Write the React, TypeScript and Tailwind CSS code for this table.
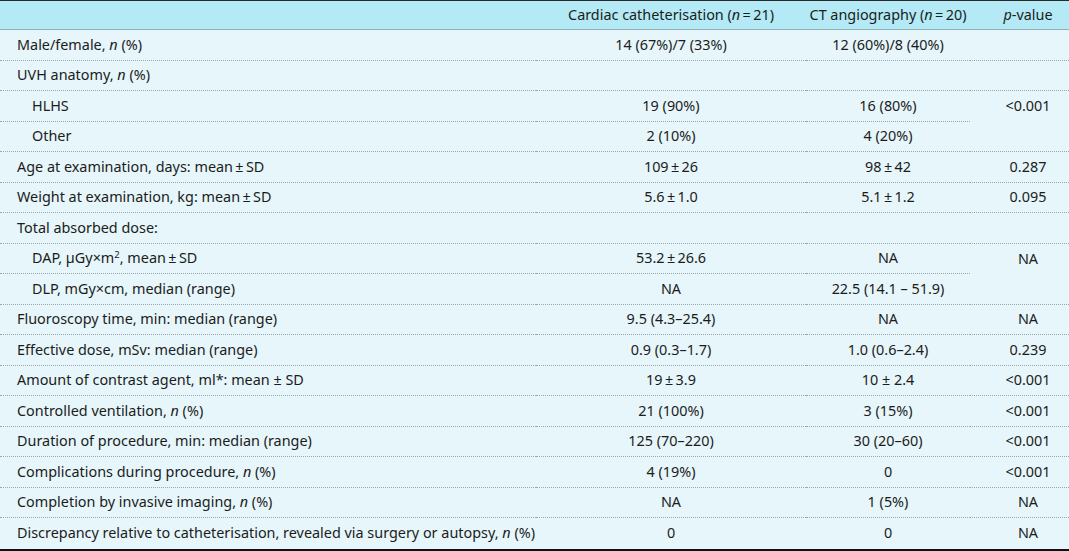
import React from "react";

type Row = {
  label: React.ReactNode;
  indent?: boolean;
  c: string;
  t: string;
  p?: string;
  pspan?: boolean;
  pskip?: boolean;
  last?: boolean;
};

const n = <i>n</i>;

const rows: Row[] = [
  { label: <>Male/female, {n} (%)</>, c: "14 (67%)/7 (33%)", t: "12 (60%)/8 (40%)", p: "" },
  { label: <>UVH anatomy, {n} (%)</>, c: "", t: "", p: "" },
  { label: "HLHS", indent: true, c: "19 (90%)", t: "16 (80%)", p: "<0.001", pspan: true },
  { label: "Other", indent: true, c: "2 (10%)", t: "4 (20%)", pskip: true },
  { label: "Age at examination, days: mean\u2009±\u2009SD", c: "109\u2009±\u200926", t: "98\u2009±\u200942", p: "0.287" },
  { label: "Weight at examination, kg: mean\u2009±\u2009SD", c: "5.6\u2009±\u20091.0", t: "5.1\u2009±\u20091.2", p: "0.095" },
  { label: "Total absorbed dose:", c: "", t: "", p: "" },
  {
    label: (
      <>
        DAP, µGy×m<span className="text-[9.5px] relative -top-[5px]">2</span>, mean{"\u2009"}±{"\u2009"}SD
      </>
    ),
    indent: true,
    c: "53.2\u2009±\u200926.6",
    t: "NA",
    p: "NA",
    pspan: true,
  },
  { label: "DLP, mGy×cm, median (range)", indent: true, c: "NA", t: "22.5 (14.1 – 51.9)", pskip: true },
  { label: "Fluoroscopy time, min: median (range)", c: "9.5 (4.3–25.4)", t: "NA", p: "NA" },
  { label: "Effective dose, mSv: median (range)", c: "0.9 (0.3–1.7)", t: "1.0 (0.6–2.4)", p: "0.239" },
  { label: "Amount of contrast agent, ml*: mean ± SD", c: "19\u2009±\u20093.9", t: "10 ± 2.4", p: "<0.001" },
  { label: <>Controlled ventilation, {n} (%)</>, c: "21 (100%)", t: "3 (15%)", p: "<0.001" },
  { label: "Duration of procedure, min: median (range)", c: "125 (70–220)", t: "30 (20–60)", p: "<0.001" },
  { label: <>Complications during procedure, {n} (%)</>, c: "4 (19%)", t: "0", p: "<0.001" },
  { label: <>Completion by invasive imaging, {n} (%)</>, c: "NA", t: "1 (5%)", p: "NA" },
  {
    label: <>Discrepancy relative to catheterisation, revealed via surgery or autopsy, {n} (%)</>,
    c: "0",
    t: "0",
    p: "NA",
    last: true,
  },
];

export default function App() {
  const div = "border-b border-dotted border-[#9aa6aa]";
  return (
    <div
      className="w-[1069px] h-[551px] bg-[#e6f6fa] text-[#1c1c1c] text-[14.4px] leading-none overflow-hidden"
      style={{ fontFamily: '"Noto Sans", "DejaVu Sans", sans-serif' }}
    >
      <div className="border-t border-[#2a2a2a]" />
      <div className="grid grid-cols-[536px_270px_164px_99px] bg-[#b3eaf5] h-[29px] border-b border-[#8fb0b8]">
        <div />
        <div className="flex items-center justify-center whitespace-nowrap">
          Cardiac catheterisation (<i>n</i>{"\u2009"}={"\u2009"}21)
        </div>
        <div className="flex items-center justify-center whitespace-nowrap">
          CT angiography (<i>n</i>{"\u2009"}={"\u2009"}20)
        </div>
        <div className="flex items-center justify-center pl-[17px] whitespace-nowrap">
          <i>p</i>-value
        </div>
      </div>
      <div className="grid grid-cols-[536px_270px_164px_99px] auto-rows-[30.53px]">
        {rows.map((r, i) => {
          const b = r.last ? "" : div;
          return (
            <React.Fragment key={i}>
              <div className={`${b} flex items-center whitespace-nowrap ${r.indent ? "pl-[32px]" : "pl-[17px]"}`}>
                <span>{r.label}</span>
              </div>
              <div className={`${b} flex items-center justify-center whitespace-nowrap`}>{r.c}</div>
              <div className={`${b} flex items-center justify-center whitespace-nowrap`}>{r.t}</div>
              {r.pskip ? null : r.pspan ? (
                <div className={`row-span-2 ${b} pl-[17px] whitespace-nowrap`}>
                  <div className="h-[30.53px] flex items-center justify-center">{r.p}</div>
                </div>
              ) : (
                <div className={`${b} flex items-center justify-center pl-[17px] whitespace-nowrap`}>{r.p}</div>
              )}
            </React.Fragment>
          );
        })}
      </div>
      <div className="border-t-2 border-[#111]" />
    </div>
  );
}
